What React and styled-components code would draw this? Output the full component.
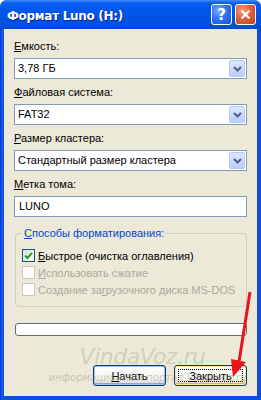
import React from "react";
import styled, { createGlobalStyle, css } from "styled-components";

const Global = createGlobalStyle`
  html, body { margin: 0; padding: 0; background: #fff; }
  body { font-family: "Liberation Sans", Tahoma, sans-serif; }
`;

const Window = styled.div`
  position: relative;
  width: 261px;
  height: 400px;
  box-sizing: border-box;
  display: flex;
  flex-direction: column;
  background: #0a4fe0;
  border-radius: 7px 7px 0 0;
  overflow: hidden;
`;

const TitleBar = styled.div`
  height: 29px;
  flex: none;
  display: flex;
  align-items: center;
  padding: 0 5px 0 7px;
  background: linear-gradient(#3f8cf7 0, #0a5df0 3px, #0058ee 8px, #0054e3 18px, #0050dc 26px, #0048d0 29px);
`;

const Title = styled.div`
  flex: 1;
  color: #fff;
  font-family: "DejaVu Sans", sans-serif;
  font-weight: bold;
  font-size: 12px;
  letter-spacing: -0.3px;
  text-shadow: 1px 1px 0 #0a1e8a;
  padding-top: 2px;
`;

const CapButton = styled.div`
  width: 21px;
  height: 21px;
  box-sizing: border-box;
  margin-left: 3px;
  border: 1px solid #fff;
  border-radius: 3px;
  display: flex;
  align-items: center;
  justify-content: center;
  color: #fff;
  font-family: "DejaVu Sans", sans-serif;
  font-weight: bold;
  font-size: 15px;
  ${(p) =>
    p.close
      ? css`
          background: radial-gradient(circle at 35% 30%, #f39c7c 0, #e4603d 45%, #c4401c 100%);
        `
      : css`
          background: radial-gradient(circle at 35% 30%, #7eaaf8 0, #2b6ff0 50%, #1a55d8 100%);
        `}
`;

const Frame = styled.div`
  flex: 1;
  display: flex;
  padding: 0 4px 4px 4px;
  background: linear-gradient(90deg, #0831d9 0, #1a5ee8 2px, #0a4fe0 4px);
`;

const Body = styled.div`
  flex: 1;
  min-width: 0;
  background: #ece9d8;
  padding: 11px 10px 0 10px;
  display: flex;
  flex-direction: column;
  font-size: 11px;
  color: #000;
`;

const Field = styled.div`
  display: flex;
  flex-direction: column;
  height: ${(p) => p.h || 46}px;
`;

const Label = styled.div`
  height: 13px;
  line-height: 13px;
  margin-bottom: 5px;
`;

const Select = styled.div`
  height: 21px;
  box-sizing: border-box;
  border: 1px solid #7f9db9;
  background: #fff;
  display: flex;
  align-items: center;
  padding: 0 1px 0 3px;
`;

const SelectText = styled.div`
  flex: 1;
  line-height: 17px;
`;

const DropButton = styled.div`
  width: 16px;
  height: 17px;
  box-sizing: border-box;
  border: 1px solid #b9cbf5;
  border-radius: 2px;
  background: linear-gradient(#dce6fd, #bccdfa);
  display: flex;
  align-items: center;
  justify-content: center;
`;

const TextBox = styled(Select)`
  padding-left: 4px;
`;

const Group = styled.fieldset`
  margin: 10px 0 0 1px;
  width: 232px;
  min-width: 0;
  box-sizing: border-box;
  border: 1px solid #d0d0bf;
  border-radius: 4px;
  padding: 7px 6px 8px 6px;
  legend {
    padding: 0 2px;
    color: #0046d5;
    line-height: 13px;
  }
`;

const CheckRow = styled.div`
  height: 17px;
  display: flex;
  align-items: center;
  white-space: nowrap;
  color: ${(p) => (p.disabled ? "#aca899" : "#000")};
`;

const Box = styled.div`
  width: 13px;
  height: 13px;
  flex: none;
  box-sizing: border-box;
  margin-right: 3px;
  border: 1px solid ${(p) => (p.disabled ? "#cac8bb" : "#1c5180")};
  background: ${(p) => (p.disabled ? "#fff" : "linear-gradient(135deg, #dcdcd7, #fff)")};
  display: flex;
  align-items: center;
  justify-content: center;
`;

const Progress = styled.div`
  margin: 16px 0 0 1px;
  width: 232px;
  height: 13px;
  box-sizing: border-box;
  border: 1px solid #686868;
  border-radius: 3px;
  background: #fff;
`;

const ButtonRow = styled.div`
  margin-top: 29px;
  display: flex;
  justify-content: flex-end;
  gap: 8px;
`;

const Button = styled.div`
  width: 73px;
  height: 21px;
  box-sizing: border-box;
  border: 1px solid #003c74;
  border-radius: 3px;
  background: linear-gradient(#ffffff, #f4f3ee 70%, #d6d0c5);
  display: flex;
  align-items: center;
  justify-content: center;
  position: relative;
  ${(p) =>
    p.def &&
    css`
      box-shadow: inset 0 0 0 1px #a8c0ef, inset 0 -1px 0 1px #86a5e6;
    `}
  ${(p) =>
    p.hover &&
    css`
      box-shadow: inset 0 0 0 1px #fce5a6, inset 0 -1px 0 1px #f0b030;
      &:after {
        content: "";
        position: absolute;
        inset: 3px;
        border: 1px dotted #000;
      }
    `}
`;

const Watermark = styled.div`
  position: absolute;
  left: 0;
  right: 0;
  top: 344px;
  text-align: center;
  pointer-events: none;
  font-family: "DejaVu Sans", sans-serif;
  font-style: italic;
  color: rgba(160, 156, 140, 0.35);
`;

const WaterBig = styled.div`
  font-size: 22px;
  letter-spacing: -0.5px;
  padding-left: 24px;
`;

const WaterSmall = styled.div`
  font-size: 10px;
  margin-top: 3px;
  padding-left: 34px;
  color: rgba(150, 146, 130, 0.45);
`;

const Arrow = styled.svg`
  position: absolute;
  left: 0;
  top: 0;
  pointer-events: none;
`;

export default function App() {
  return (
    <>
      <Global />
      <Window>
        <TitleBar>
          <Title>Формат Luno (H:)</Title>
          <CapButton>?</CapButton>
          <CapButton close>
            <svg width="11" height="11" viewBox="0 0 11 11">
              <path d="M1.5 1.5 L9.5 9.5 M9.5 1.5 L1.5 9.5" stroke="#fff" strokeWidth="2.2" />
            </svg>
          </CapButton>
        </TitleBar>
        <Frame>
          <Body>
            <Field>
              <Label><u>Е</u>мкость:</Label>
              <Select>
                <SelectText>3,78 ГБ</SelectText>
                <DropButton><Chevron /></DropButton>
              </Select>
            </Field>
            <Field>
              <Label><u>Ф</u>айловая система:</Label>
              <Select>
                <SelectText>FAT32</SelectText>
                <DropButton><Chevron /></DropButton>
              </Select>
            </Field>
            <Field>
              <Label><u>Р</u>азмер кластера:</Label>
              <Select>
                <SelectText>Стандартный размер кластера</SelectText>
                <DropButton><Chevron /></DropButton>
              </Select>
            </Field>
            <Field h={39}>
              <Label><u>М</u>етка тома:</Label>
              <TextBox>
                <SelectText>LUNO</SelectText>
              </TextBox>
            </Field>
            <Group>
              <legend><u>С</u>пособы форматирования:</legend>
              <CheckRow>
                <Box>
                  <svg width="9" height="9" viewBox="0 0 9 9">
                    <path d="M1 4.5 L3.5 7 L8 1.8" stroke="#21a121" strokeWidth="2" fill="none" />
                  </svg>
                </Box>
                <span><u>Б</u>ыстрое (очистка оглавления)</span>
              </CheckRow>
              <CheckRow disabled>
                <Box disabled />
                <span><u>И</u>спользовать сжатие</span>
              </CheckRow>
              <CheckRow disabled>
                <Box disabled />
                <span>Создание за<u>г</u>рузочного диска MS-DOS</span>
              </CheckRow>
            </Group>
            <Progress />
            <ButtonRow>
              <Button def><span><u>Н</u>ачать</span></Button>
              <Button hover><span><u>З</u>акрыть</span></Button>
            </ButtonRow>
          </Body>
        </Frame>
        <Watermark>
          <WaterBig>VindaVoz.ru</WaterBig>
          <WaterSmall>информационный портал VindaVoz.ru</WaterSmall>
        </Watermark>
        <Arrow width="261" height="400" viewBox="0 0 261 400">
          <path d="M250 292 L239 362" stroke="#e8141c" strokeWidth="3" fill="none" />
          <path d="M233 377 L231 359 L246 362 Z" fill="#e8141c" />
        </Arrow>
      </Window>
    </>
  );
}

function Chevron() {
  return (
    <svg width="9" height="6" viewBox="0 0 9 6">
      <path d="M1 1 L4.5 4.5 L8 1" stroke="#4d6185" strokeWidth="2" fill="none" />
    </svg>
  );
}
